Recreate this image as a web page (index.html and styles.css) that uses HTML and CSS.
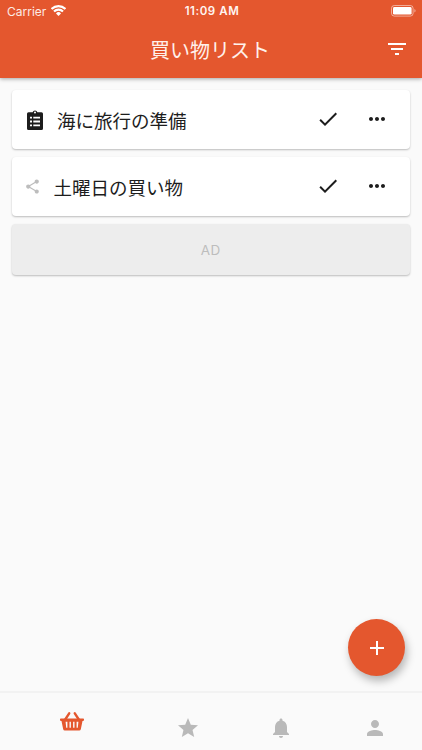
FILE: index.html
```html
<!DOCTYPE html>
<html lang="ja">
<head>
<meta charset="utf-8">
<meta name="viewport" content="width=device-width, initial-scale=1">
<title>買い物リスト</title>
<link rel="stylesheet" href="styles.css">
</head>
<body>
<div class="app">
  <header class="header">
    <div class="status">
      <div class="carrier"><span>Carrier</span>
        <svg class="wifi" viewBox="0 0 15 11"><path d="M.6 4a9.800 9.800 0 0 1 13.800 0M3 6.500a6.400 6.400 0 0 1 9 0" fill="none" stroke="currentColor" stroke-width="2.100"/><path d="M5 8.400a3.500 3.500 0 0 1 5 0L7.500 10.900z" fill="currentColor"/></svg>
      </div>
      <div class="clock">11:09 AM</div>
      <svg class="battery" viewBox="0 0 26 12"><rect x=".5" y=".5" width="21.6" height="10.6" rx="2.8" fill="none" stroke="currentColor" opacity=".5"/><rect x="2" y="2" width="18.6" height="7.6" rx="1.4" fill="currentColor"/><path d="M23.4 4v3.6c1.6-.6 1.6-3 0-3.6z" fill="currentColor" opacity=".5"/></svg>
    </div>
    <div class="toolbar">
      <h1 class="title">買い物リスト</h1>
      <svg class="icon filter" viewBox="0 0 24 24"><path d="M10 18h4v-2h-4v2zM3 6v2h18V6H3zm3 7h12v-2H6v2z"/></svg>
    </div>
  </header>

  <main class="content">
    <div class="card">
      <svg class="clipboard" viewBox="0 0 16 20"><path fill-rule="evenodd" d="M1.500 2.300h4.100a2.500 2.500 0 0 1 4.800 0h4.100a1.500 1.500 0 0 1 1.500 1.500v14.700a1.500 1.500 0 0 1-1.500 1.500h-13A1.500 1.500 0 0 1 0 18.500V3.800a1.500 1.500 0 0 1 1.500-1.500zM8 1.400a1 1 0 1 0 0 2a1 1 0 0 0 0-2zM3 6.800v1.800h2V6.800zM6.300 6.800v1.800H13V6.800zM3 10.600v1.800h2v-1.800zM6.300 10.600v1.800H13v-1.800zM3 14.400v1.800h2v-1.800zM6.300 14.400v1.800H13v-1.800z"/></svg>
      <span class="name">海に旅行の準備</span>
      <svg class="icon" viewBox="0 0 24 24"><path d="M9 16.170L4.830 12l-1.420 1.410L9 19 21 7l-1.410-1.410z"/></svg>
      <svg class="icon more" viewBox="0 0 24 24"><path d="M6 10c-1.100 0-2 .9-2 2s.9 2 2 2 2-.9 2-2-.9-2-2-2zm12 0c-1.100 0-2 .9-2 2s.9 2 2 2 2-.9 2-2-.9-2-2-2zm-6 0c-1.100 0-2 .9-2 2s.9 2 2 2 2-.9 2-2-.9-2-2-2z"/></svg>
    </div>
    <div class="card shared">
      <svg class="share" viewBox="0 0 24 24"><path d="M18 16.080c-.76 0-1.440.3-1.960.77L8.910 12.700c.05-.23.09-.46.09-.7s-.04-.47-.09-.7l7.050-4.110c.54.5 1.250.81 2.040.81 1.660 0 3-1.340 3-3s-1.340-3-3-3-3 1.340-3 3c0 .24.04.47.09.7L8.040 9.810C7.500 9.310 6.790 9 6 9c-1.660 0-3 1.340-3 3s1.340 3 3 3c.79 0 1.500-.31 2.040-.81l7.120 4.160c-.05.21-.08.43-.08.65 0 1.610 1.310 2.920 2.920 2.920s2.920-1.310 2.920-2.920-1.310-2.920-2.920-2.920z"/></svg>
      <span class="name">土曜日の買い物</span>
      <svg class="icon" viewBox="0 0 24 24"><path d="M9 16.170L4.830 12l-1.420 1.410L9 19 21 7l-1.410-1.410z"/></svg>
      <svg class="icon more" viewBox="0 0 24 24"><path d="M6 10c-1.100 0-2 .9-2 2s.9 2 2 2 2-.9 2-2-.9-2-2-2zm12 0c-1.100 0-2 .9-2 2s.9 2 2 2 2-.9 2-2-.9-2-2-2zm-6 0c-1.100 0-2 .9-2 2s.9 2 2 2 2-.9 2-2-.9-2-2-2z"/></svg>
    </div>
    <div class="card ad">AD</div>
  </main>

  <div class="fab"><svg class="icon" viewBox="0 0 24 24"><path d="M19 13h-6v6h-2v-6H5v-2h6V5h2v6h6v2z"/></svg></div>

  <nav class="tabs">
    <svg class="basket" viewBox="0 0 24 19"><path d="M5.200 7.500L9.200 1.300M18.800 7.500L14.800 1.300" fill="none" stroke="currentColor" stroke-width="2.400" stroke-linecap="round"/><path fill-rule="evenodd" fill="currentColor" d="M.8 6.500h22.400q.8 0 .8.800v.8q0 .8-.8.800h-.7l-1.700 8.300q-.3 1.300-1.600 1.300H4.800q-1.300 0-1.600-1.300L1.500 8.900H.8Q0 8.900 0 8.100v-.8q0-.8.8-.8zM5.600 9.800l.6 6h1.200v-6zM9.500 9.800v6h1.400v-6zM13.100 9.800v6h1.400v-6zM16.600 9.800v6h1.200l.6-6z"/></svg>
    <svg class="icon" viewBox="0 0 24 24"><path d="M12 17.270L18.180 21l-1.640-7.030L22 9.240l-7.190-.61L12 2 9.190 8.630 2 9.240l5.460 4.730L5.820 21z"/></svg>
    <svg class="icon" viewBox="0 0 24 24"><path d="M12 22c1.100 0 2-.9 2-2h-4c0 1.100.89 2 2 2zm6-6v-5c0-3.070-1.640-5.640-4.500-6.320V4c0-.83-.67-1.500-1.500-1.500s-1.500.67-1.500 1.500v.68C7.630 5.360 6 7.920 6 11v5l-2 2v1h16v-1l-2-2z"/></svg>
    <svg class="icon" viewBox="0 0 24 24"><path d="M12 12c2.210 0 4-1.790 4-4s-1.790-4-4-4-4 1.790-4 4 1.790 4 4 4zm0 2c-2.670 0-8 1.340-8 4v2h16v-2c0-2.660-5.330-4-8-4z"/></svg>
  </nav>
</div>
</body>
</html>
```
FILE: styles.css
```css
* { box-sizing: border-box; }
body { margin: 0; background: #fafafa; color: #1d1d1d; font-family: Inter, "Noto Sans CJK JP", sans-serif; }
svg { display: block; flex: none; }
.icon { width: 24px; height: 24px; fill: currentColor; }
.app { position: relative; height: 750px; display: flex; flex-direction: column; overflow: hidden; }

.header { height: 78px; flex: none; background: #e4572e; color: #fff; box-shadow: 0 1px 4px rgba(0, 0, 0, .35); }
.status { height: 22px; display: grid; grid-template-columns: 1fr auto 1fr; align-items: center; padding: 0 5px 0 7px; font-size: 12px; }
.carrier { display: flex; align-items: center; gap: 5px; color: #fdeae4; }
.wifi { width: 15px; height: 11px; margin-top: -1px; color: #fff; }
.clock { font-size: 11.500px; font-weight: 600; letter-spacing: .55px; color: #fff5f1; }
.battery { width: 26px; height: 12px; justify-self: end; margin-top: -1px; }
.toolbar { height: 56px; display: grid; grid-template-columns: 1fr auto 1fr; align-items: center; padding: 0 13px; }
.title { grid-column: 2; margin: 2px 2px 0 0; font-size: 20px; font-weight: 400; line-height: 28px; color: #fff1eb; }
.filter { justify-self: end; margin-top: -2px; }

.content { flex: 1; padding: 12px 12.500px 0 12px; display: flex; flex-direction: column; gap: 8px; }
.card { height: 59px; flex: none; display: flex; align-items: center; padding: 0 20.500px 0 15px; background: #fff; border-radius: 4px; box-shadow: 0 1px 2px rgba(0, 0, 0, .25); }
.clipboard { width: 16px; height: 20px; fill: #1d1d1d; }
.name { flex: 1; margin: 2px 0 0 14px; font-size: 18.500px; line-height: 28px; }
.share { width: 17px; height: 17px; margin-left: -3px; fill: #bdbdbd; }
.shared .name { margin-left: 12.500px; }
.card .icon { margin-top: -1px; }
.more { margin-left: 25px; }
.ad { height: 51px; justify-content: center; padding: 0; background: #ededed; color: #bdbdbd; font-size: 13.500px; letter-spacing: .5px; }

.fab { position: absolute; right: 17px; bottom: 74px; width: 57px; height: 57px; border-radius: 50%; display: flex; align-items: center; justify-content: center; background: #e4572e; color: #fff; box-shadow: 2px 5px 8px rgba(0, 0, 0, .28); }
.tabs { height: 59px; flex: none; display: grid; grid-template-columns: 141px 91px 96px 92px; justify-items: center; padding: 23px 1px 0; border-top: 2px solid #f2f2f2; color: #b9b9b9; }
.basket { width: 24px; height: 19px; margin-top: -4px; color: #e4572e; }
```
